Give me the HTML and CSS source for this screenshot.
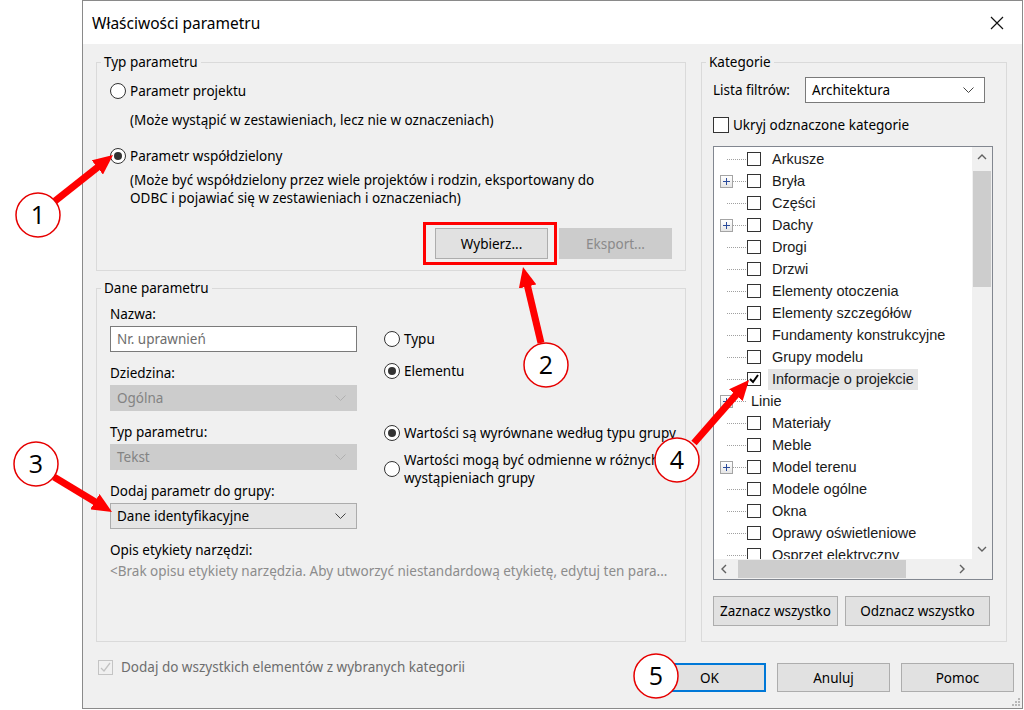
FILE: index.html
```html
<!DOCTYPE html>
<html lang="pl">
<head>
    <meta charset="UTF-8">
    <title>Właściwości parametru</title>
    <link rel="stylesheet" href="styles.css">
</head>
<body>
    <div class="dialog">
        <div class="titlebar">
            <span class="title">Właściwości parametru</span>
            <svg class="close" width="14" height="14" viewBox="0 0 14 14"><path d="M1 1L13 13M13 1L1 13" stroke="#111" stroke-width="1.2" fill="none"/></svg>
        </div>

        <div class="dialog-body">
            <div class="col-left">
                <!-- Typ parametru -->
                <div class="group group-type">
                    <span class="group-title">Typ parametru</span>
                    <div class="radio-row"><span class="radio"></span>Parametr projektu</div>
                    <p class="hint hint-1">(Może wystąpić w zestawieniach, lecz nie w oznaczeniach)</p>
                    <div class="radio-row type-shared"><span class="radio checked"></span>Parametr współdzielony</div>
                    <p class="hint hint-2">(Może być współdzielony przez wiele projektów i rodzin, eksportowany do<br>ODBC i pojawiać się w zestawieniach i oznaczeniach)</p>
                    <div class="btn-row">
                        <button class="btn">Wybierz...</button>
                        <button class="btn" disabled>Eksport...</button>
                    </div>
                </div>

                <!-- Dane parametru -->
                <div class="group group-data">
                    <span class="group-title">Dane parametru</span>
                    <div class="data-grid">
                        <div class="fields">
                            <div class="field-label">Nazwa:</div>
                            <div class="textbox">Nr. uprawnień</div>
                            <div class="field-label">Dziedzina:</div>
                            <div class="combo disabled">Ogólna
                                <svg width="11" height="6" viewBox="0 0 11 6"><path d="M0.5 0.5L5.5 5.5L10.5 0.5" stroke="#b0b0b0" fill="none"/></svg>
                            </div>
                            <div class="field-label">Typ parametru:</div>
                            <div class="combo disabled">Tekst
                                <svg width="11" height="6" viewBox="0 0 11 6"><path d="M0.5 0.5L5.5 5.5L10.5 0.5" stroke="#b0b0b0" fill="none"/></svg>
                            </div>
                            <div class="field-label">Dodaj parametr do grupy:</div>
                            <div class="combo active">Dane identyfikacyjne
                                <svg width="11" height="6" viewBox="0 0 11 6"><path d="M0.5 0.5L5.5 5.5L10.5 0.5" stroke="#444" fill="none"/></svg>
                            </div>
                        </div>
                        <div class="options">
                            <div class="radio-row"><span class="radio"></span>Typu</div>
                            <div class="radio-row opt-element"><span class="radio checked"></span>Elementu</div>
                            <div class="radio-row opt-group"><span class="radio checked"></span>Wartości są wyrównane według typu grupy</div>
                            <div class="radio-row radio-two"><span class="radio"></span>Wartości mogą być odmienne w różnych<br>wystąpieniach grupy</div>
                        </div>
                    </div>
                    <div class="field-label">Opis etykiety narzędzi:</div>
                    <p class="tooltip-text">&lt;Brak opisu etykiety narzędzia. Aby utworzyć niestandardową etykietę, edytuj ten para...</p>
                </div>
            </div>

            <!-- Kategorie -->
            <div class="group group-cat">
                <span class="group-title">Kategorie</span>
                <div class="filter-row">
                    <span>Lista filtrów:</span>
                    <div class="combo white">Architektura
                        <svg width="11" height="6" viewBox="0 0 11 6"><path d="M0.5 0.5L5.5 5.5L10.5 0.5" stroke="#444" fill="none"/></svg>
                    </div>
                </div>
                <div class="check-row"><span class="checkbox"></span>Ukryj odznaczone kategorie</div>

                <div class="tree">
                    <div class="tree-items">
                        <div class="node"><span class="stub"></span><span class="cb"></span>Arkusze</div>
                        <div class="node"><span class="plus"></span><span class="stub short"></span><span class="cb"></span>Bryła</div>
                        <div class="node"><span class="stub"></span><span class="cb"></span>Części</div>
                        <div class="node"><span class="plus"></span><span class="stub short"></span><span class="cb"></span>Dachy</div>
                        <div class="node"><span class="stub"></span><span class="cb"></span>Drogi</div>
                        <div class="node"><span class="stub"></span><span class="cb"></span>Drzwi</div>
                        <div class="node"><span class="stub"></span><span class="cb"></span>Elementy otoczenia</div>
                        <div class="node"><span class="stub"></span><span class="cb"></span>Elementy szczegółów</div>
                        <div class="node"><span class="stub"></span><span class="cb"></span>Fundamenty konstrukcyjne</div>
                        <div class="node"><span class="stub"></span><span class="cb"></span>Grupy modelu</div>
                        <div class="node"><span class="stub"></span><span class="cb">
                            <svg width="12" height="12" viewBox="0 0 12 12"><path d="M2 6L5 9L10 2" stroke="#000" stroke-width="2" fill="none"/></svg>
                        </span><span class="selected">Informacje o projekcie</span></div>
                        <div class="node"><span class="plus"></span><span class="stub short"></span><span class="node-bare">Linie</span></div>
                        <div class="node"><span class="stub"></span><span class="cb"></span>Materiały</div>
                        <div class="node"><span class="stub"></span><span class="cb"></span>Meble</div>
                        <div class="node"><span class="plus"></span><span class="stub short"></span><span class="cb"></span>Model terenu</div>
                        <div class="node"><span class="stub"></span><span class="cb"></span>Modele ogólne</div>
                        <div class="node"><span class="stub"></span><span class="cb"></span>Okna</div>
                        <div class="node"><span class="stub"></span><span class="cb"></span>Oprawy oświetleniowe</div>
                        <div class="node"><span class="stub"></span><span class="cb"></span>Osprzęt elektryczny</div>
                    </div>
                    <div class="vscroll">
                        <span class="arrow"><svg width="10" height="6" viewBox="0 0 10 6"><path d="M1 5L5 1L9 5" stroke="#606060" stroke-width="1.4" fill="none"/></svg></span>
                        <span class="vthumb"></span>
                        <span class="arrow arrow-end"><svg width="10" height="6" viewBox="0 0 10 6"><path d="M1 1L5 5L9 1" stroke="#606060" stroke-width="1.4" fill="none"/></svg></span>
                    </div>
                    <div class="hscroll">
                        <span class="arrow"><svg width="6" height="10" viewBox="0 0 6 10"><path d="M5 1L1 5L5 9" stroke="#606060" stroke-width="1.4" fill="none"/></svg></span>
                        <span class="hthumb"></span>
                        <span class="arrow arrow-end"><svg width="6" height="10" viewBox="0 0 6 10"><path d="M1 1L5 5L1 9" stroke="#606060" stroke-width="1.4" fill="none"/></svg></span>
                    </div>
                    <div class="corner"></div>
                </div>

                <div class="cat-buttons">
                    <button class="btn btn-all">Zaznacz wszystko</button>
                    <button class="btn btn-none">Odznacz wszystko</button>
                </div>
            </div>
        </div>

        <div class="footer">
            <div class="footer-check">
                <span class="checkbox">
                    <svg width="13" height="13" viewBox="0 0 13 13"><path d="M2 7L5 10L11 2" stroke="#c2c2c2" stroke-width="1.3" fill="none"/></svg>
                </span>
                Dodaj do wszystkich elementów z wybranych kategorii
            </div>
            <div class="footer-buttons">
                <button class="btn btn-default">OK</button>
                <button class="btn">Anuluj</button>
                <button class="btn">Pomoc</button>
            </div>
        </div>

        <svg class="grip" width="8" height="8" viewBox="0 0 8 8">
            <rect x="6" y="0" width="2" height="2" fill="#b8b8b8"/>
            <rect x="3" y="3" width="2" height="2" fill="#b8b8b8"/>
            <rect x="6" y="3" width="2" height="2" fill="#b8b8b8"/>
            <rect x="0" y="6" width="2" height="2" fill="#b8b8b8"/>
            <rect x="3" y="6" width="2" height="2" fill="#b8b8b8"/>
            <rect x="6" y="6" width="2" height="2" fill="#b8b8b8"/>
        </svg>
    </div>

    <!-- tutorial annotations drawn over the dialog -->
    <svg class="annotations" width="1024" height="710" viewBox="0 0 1024 710">
        <defs>
            <marker id="head" viewBox="0 0 20 18" refX="4" refY="9" markerWidth="20" markerHeight="18" markerUnits="userSpaceOnUse" orient="auto">
                <path d="M0 0L20 9L0 18Z" fill="#ff0000"/>
            </marker>
        </defs>
        <rect x="424.5" y="223.5" width="131" height="40" fill="none" stroke="#ff0000" stroke-width="3"/>

        <line x1="55" y1="201" x2="100.5" y2="165" stroke="#ff0000" stroke-width="7" marker-end="url(#head)"/>
        <line x1="541" y1="343" x2="526.7" y2="282.6" stroke="#ff0000" stroke-width="7" marker-end="url(#head)"/>
        <line x1="54" y1="477" x2="98.3" y2="503.7" stroke="#ff0000" stroke-width="7" marker-end="url(#head)"/>
        <line x1="694" y1="443" x2="738.5" y2="392.1" stroke="#ff0000" stroke-width="7" marker-end="url(#head)"/>

        <g class="badge">
            <circle cx="38" cy="215" r="22"/>
            <text x="38" y="224">1</text>
        </g>
        <g class="badge">
            <circle cx="546" cy="365" r="22"/>
            <text x="546" y="374">2</text>
        </g>
        <g class="badge">
            <circle cx="36" cy="464" r="22"/>
            <text x="36" y="473">3</text>
        </g>
        <g class="badge">
            <circle cx="677" cy="460" r="22"/>
            <text x="677" y="469">4</text>
        </g>
        <g class="badge">
            <circle cx="656" cy="676" r="22"/>
            <text x="656" y="685">5</text>
        </g>
    </svg>
</body>
</html>
```

FILE: styles.css
```css
* {
    margin: 0;
    padding: 0;
    box-sizing: border-box;
}

body {
    width: 1024px;
    height: 710px;
    overflow: hidden;
    position: relative;
    background: #ffffff;
    font-family: "Noto Sans", "Liberation Sans", sans-serif;
    font-size: 13.5px;
    color: #000000;
}

.dialog {
    position: relative;
    margin-left: 82px;
    width: 941px;
    height: 709px;
    border: 1px solid #8a8a8a;
    background: #f0f0f0;
    display: flex;
    flex-direction: column;
}

.titlebar {
    height: 43px;
    background: #ffffff;
    display: flex;
    align-items: center;
    justify-content: space-between;
    padding: 0 18px 0 9px;
    font-size: 15.5px;
}

.close {
    display: block;
}

.dialog-body {
    display: flex;
    gap: 15px;
    padding: 18px 15px 0 13px;
}

.col-left {
    width: 590px;
    display: flex;
    flex-direction: column;
    gap: 17px;
}

/* group boxes */
.group {
    position: relative;
    border: 1px solid #dadada;
}

.group-title {
    position: absolute;
    top: -10px;
    left: 4px;
    padding: 0 3px;
    background: #f0f0f0;
    line-height: 18px;
}

.radio-row {
    display: flex;
    align-items: center;
    height: 18px;
    line-height: 18px;
    white-space: nowrap;
}

.radio {
    flex: none;
    width: 16px;
    height: 16px;
    margin-right: 4px;
    border: 1px solid #333333;
    border-radius: 50%;
    background: #ffffff;
    display: flex;
    align-items: center;
    justify-content: center;
}

.radio.checked::after {
    content: "";
    width: 8px;
    height: 8px;
    border-radius: 50%;
    background: #333333;
}

.btn {
    font: inherit;
    color: #000000;
    background: #e1e1e1;
    border: 1px solid #adadad;
}

.btn:disabled {
    background: #cccccc;
    border-color: #cccccc;
    color: #8a8a8a;
}

/* Typ parametru */
.group-type {
    height: 209px;
    padding: 19px 13px 0 13px;
}

.hint {
    margin-left: 20px;
    line-height: 18px;
}

.hint-1 {
    margin-top: 11px;
}

.type-shared {
    margin-top: 18px;
}

.hint-2 {
    margin-top: 6px;
}

.btn-row {
    display: flex;
    justify-content: flex-end;
    gap: 11px;
    margin-top: 21px;
}

.btn-row .btn {
    width: 113px;
    height: 31px;
}

/* Dane parametru */
.group-data {
    height: 354px;
    padding: 16px 13px 0 13px;
}

.data-grid {
    display: flex;
    gap: 27px;
}

.fields {
    width: 249px;
}

.field-label {
    line-height: 18px;
    margin-bottom: 3px;
}

.textbox {
    width: 247px;
    height: 26px;
    margin-bottom: 12px;
    padding-left: 6px;
    line-height: 24px;
    background: #ffffff;
    border: 1px solid #7a7a7a;
    color: #6d6d6d;
}

.combo {
    height: 26px;
    margin-bottom: 12px;
    padding: 0 10px 0 6px;
    display: flex;
    align-items: center;
    justify-content: space-between;
    border: 1px solid #acacac;
    background: #e5e5e5;
}

.combo.disabled {
    background: #cccccc;
    border-color: #cccccc;
    color: #838383;
}

.combo.white {
    background: #ffffff;
    border-color: #7a7a7a;
}

.options {
    padding-top: 25px;
}

.opt-element {
    margin-top: 14px;
}

.opt-group {
    margin-top: 44px;
}

.radio-two {
    margin-top: 9px;
    height: 36px;
}

.tooltip-text {
    margin-top: 3px;
    line-height: 18px;
    color: #8c8c8c;
    white-space: nowrap;
}

/* Kategorie */
.group-cat {
    width: 306px;
    height: 580px;
    padding: 14px 13px 0 11px;
}

.filter-row {
    display: flex;
    align-items: center;
}

.filter-row .combo {
    width: 180px;
    margin: 0 8px 0 auto;
}

.check-row {
    display: flex;
    align-items: center;
    height: 16px;
    margin-top: 14px;
}

.checkbox {
    flex: none;
    width: 16px;
    height: 16px;
    margin-right: 4px;
    border: 1px solid #333333;
    background: #ffffff;
}

.tree {
    height: 434px;
    margin-top: 13px;
    border: 1px solid #828790;
    background: #ffffff;
    display: grid;
    grid-template-columns: 1fr 20px;
    grid-template-rows: 1fr 20px;
    font-family: "Liberation Sans", Arial, sans-serif;
    font-size: 14.5px;
    color: #1a1a1a;
}

.tree-items {
    overflow: hidden;
    padding-top: 1px;
}

.node {
    display: flex;
    align-items: center;
    height: 22px;
    padding-left: 6px;
    white-space: nowrap;
}

.stub {
    width: 19px;
    margin: 0 1px 0 7px;
    border-top: 1px dotted #a0a0a0;
}

.stub.short {
    width: 13px;
    margin-left: 0;
}

.plus {
    flex: none;
    width: 13px;
    height: 13px;
    border: 1px solid #a4a4a4;
    background:
        linear-gradient(#2b4b9b, #2b4b9b) center / 7px 1px no-repeat,
        linear-gradient(#2b4b9b, #2b4b9b) center / 1px 7px no-repeat,
        linear-gradient(#ffffff, #e6e6e6);
}

.cb {
    flex: none;
    width: 14px;
    height: 14px;
    margin-right: 11px;
    border: 1px solid #333333;
    background: #ffffff;
    display: flex;
    align-items: center;
    justify-content: center;
}

.selected {
    margin-left: -4px;
    padding: 0 4px;
    line-height: 21px;
    background: #e5e5e5;
}

.node-bare {
    margin-left: 4px;
}

.vscroll,
.hscroll {
    background: #f0f0f0;
    display: flex;
    align-items: center;
}

.vscroll {
    flex-direction: column;
}

.arrow {
    flex: none;
    width: 20px;
    height: 20px;
    display: flex;
    align-items: center;
    justify-content: center;
}

.arrow-end {
    margin: auto 0 0 0;
}

.hscroll .arrow-end {
    margin: 0 0 0 auto;
}

.vthumb {
    width: 18px;
    height: 116px;
    margin-top: 4px;
    background: #cdcdcd;
}

.hthumb {
    width: 168px;
    height: 18px;
    margin-left: 4px;
    background: #cdcdcd;
}

.corner {
    background: #f0f0f0;
}

.cat-buttons {
    display: flex;
    gap: 7px;
    margin-top: 16px;
}

.cat-buttons .btn {
    height: 30px;
}

.btn-all {
    width: 125px;
}

.btn-none {
    width: 145px;
}

/* footer */
.footer {
    flex: 1;
    display: flex;
    align-items: flex-start;
    padding: 0 8px 0 15px;
}

.footer-check {
    display: flex;
    align-items: center;
    margin-top: 16px;
    color: #6d6d6d;
}

.footer-check .checkbox {
    width: 15px;
    height: 15px;
    margin-right: 8px;
    border-color: #c4c4c4;
    background: #f0f0f0;
}

.footer-check svg {
    display: block;
}

.footer-buttons {
    display: flex;
    gap: 11px;
    margin: 21px 0 0 auto;
}

.footer-buttons .btn {
    width: 113px;
    height: 29px;
}

.btn-default {
    border-color: #0078d7;
    box-shadow: inset 0 0 0 1px #0078d7;
}

.grip {
    position: absolute;
    right: 2px;
    bottom: 2px;
}

/* annotations */
.annotations {
    position: absolute;
    top: 0;
    left: 0;
    pointer-events: none;
}

.badge circle {
    fill: #ffffff;
    stroke: #e60000;
    stroke-width: 1.5;
}

.badge text {
    font-family: "Open Sans", "Noto Sans", sans-serif;
    font-size: 25px;
    text-anchor: middle;
    fill: #000000;
}
```
